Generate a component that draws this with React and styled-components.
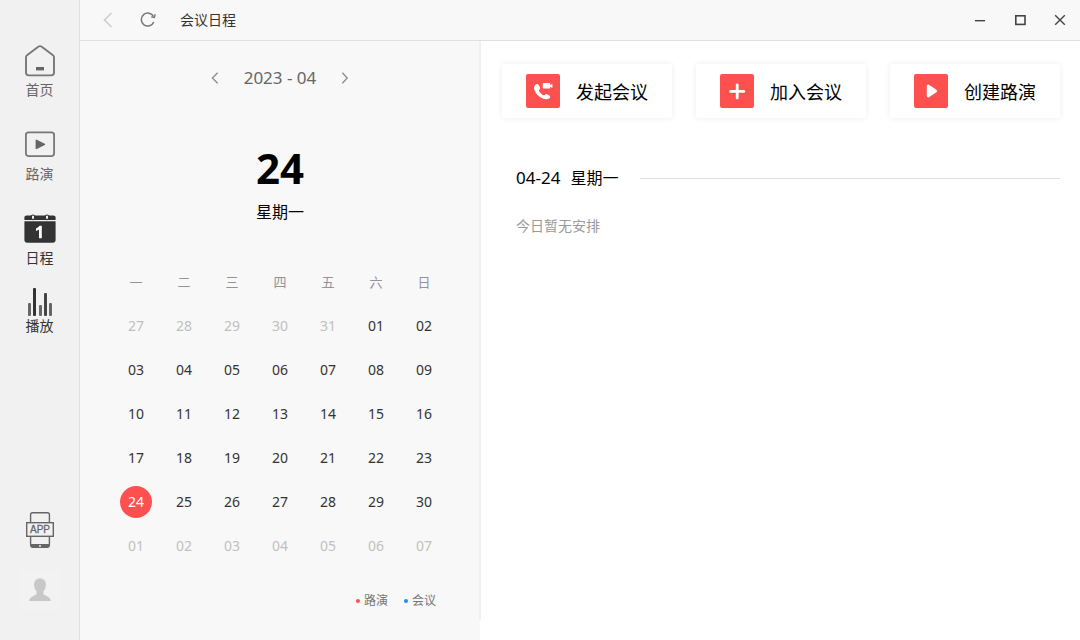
import React,{useState} from 'react';
import styled,{createGlobalStyle} from "styled-components";

const weekNames=["一","二","三","四","五","六","日"];

// April 2023, padded with the days of the months around it
const weeks=[
  ["27","28","29","30","31","01","02"],
  ["03","04","05","06","07","08","09"],
  ["10","11","12","13","14","15","16"],
  ["17","18","19","20","21","22","23"],
  ["24","25","26","27","28","29","30"],
  ["01","02","03","04","05","06","07"],
];

const isOutside=(week,day)=>(week===0 && Number(day)>20) || week===5;

function HomeIcon() {
  return (
    <svg width="32" height="32" viewBox="0 0 32 32" fill="none">
      <path d="M2 12.2Q2 11 3 10.3L14.6 1.6Q16 .6 17.4 1.6L29 10.3Q30 11 30 12.2V27.6Q30 30.4 27.2 30.4H4.8Q2 30.4 2 27.6Z" stroke="#777" strokeWidth="1.9" />
      <rect x="12" y="22" width="8" height="3.4" fill="#666" />
    </svg>
  )
}

function RoadshowIcon() {
  return (
    <svg width="32" height="32" viewBox="0 0 32 32" fill="none">
      <rect x="1.9" y="3.3" width="28.2" height="23.8" rx="2.8" stroke="#777" strokeWidth="1.8" />
      <path d="M12.4 11.4L20.4 15.4L12.4 19.4Z" fill="#666" stroke="#666" strokeWidth="1.6" strokeLinejoin="round" />
    </svg>
  )
}

function ScheduleIcon() {
  return (
    <svg width="32" height="32" viewBox="0 0 32 32">
      <path d="M.4 7V4.6Q.4 2.4 2.6 2.4H29.4Q31.6 2.4 31.6 4.6V7Z" fill="#333" />
      <path d="M.4 8.2H31.6V26.8Q31.6 29.8 28.6 29.8H3.4Q.4 29.8 .4 26.8Z" fill="#333" />
      <rect x="7.4" y="2" width="3.2" height="4.6" rx="1.6" fill="#f1f1f1" stroke="#333" strokeWidth="1.2" />
      <rect x="21.4" y="2" width="3.2" height="4.6" rx="1.6" fill="#f1f1f1" stroke="#333" strokeWidth="1.2" />
      <path d="M12 15.4Q14.6 14.6 15.6 12.8H17.8V25.2H15V16.6Q13.8 17.5 12 17.9Z" fill="#fff" />
    </svg>
  )
}

function PlayIcon() {
  return (
    <svg width="32" height="28" viewBox="0 0 32 28">
      <rect x="4" y="15" width="3" height="13" rx="1" fill="#666" />
      <rect x="9" y="0" width="3" height="28" rx="1" fill="#333" />
      <rect x="15" y="17" width="3" height="11" rx="1" fill="#666" />
      <rect x="20" y="5" width="3" height="23" rx="1" fill="#444" />
      <rect x="25" y="15" width="3" height="13" rx="1" fill="#666" />
    </svg>
  )
}

function PhoneAppIcon() {
  return (
    <svg width="28" height="36" viewBox="0 0 28 36" fill="none">
      <path d="M4.6 10V2.6Q4.6.7 6.4.7H21.6Q23.4.7 23.4 2.6V10" stroke="#666" strokeWidth="1.4" />
      <path d="M4.6 24V32.5M23.4 24V32.5" stroke="#666" strokeWidth="1.4" />
      <path d="M4 32H24V33.6Q24 36 21.6 36H6.4Q4 36 4 33.6Z" fill="#666" />
      <circle cx="14" cy="34" r="1" fill="#f1f1f1" />
      <rect x=".7" y="10.7" width="26.6" height="13.6" stroke="#666" strokeWidth="1.4" />
      <text x="14" y="21" textAnchor="middle" fontFamily="Liberation Sans, sans-serif" fontSize="10" fill="#666" stroke="#666" strokeWidth=".3">APP</text>
    </svg>
  )
}

function PersonIcon() {
  return (
    <svg width="24" height="24" viewBox="0 0 24 24" fill="#c8c8c8">
      <path d="M12 .6C15.8.6 18 3 17.9 6.8C17.8 9.4 17 11.8 15.4 13.3V15.8C15.4 17.4 22.8 18.4 22.8 23H1.2C1.2 18.4 8.6 17.4 8.6 15.8V13.3C7 11.8 6.2 9.4 6.1 6.8C6 3 8.2.6 12 .6Z" />
    </svg>
  )
}

function Chevron({size,color,flip}) {
  return (
    <svg width={size} height={size} viewBox="0 0 16 16" fill="none">
      <path d={flip ? "M4.5 1L11 8L4.5 15" : "M11.5 1L4.5 8L11.5 15"} stroke={color} strokeWidth="1.6" />
    </svg>
  )
}

function RefreshIcon() {
  return (
    <svg width="16" height="16" viewBox="0 0 16 16" fill="none">
      <path d="M13.6 4.6A6.5 6.5 0 1 0 13.8 10" stroke="#777" strokeWidth="1.5" />
      <path d="M15.2 2.2L14.4 5.4L11.2 4.8" stroke="#777" strokeWidth="1.3" />
    </svg>
  )
}

function CallIcon() {
  return (
    <svg width="34" height="34" viewBox="0 0 34 34" fill="#fff">
      <path d="M9.4 10.8C10.6 9.6 11.8 9.6 12.7 11L13.8 13C14.4 14.2 14 15 13.2 15.9C12.8 16.5 12.9 17 13.3 17.6C14.3 19.2 15.6 20.3 17.2 21.2C17.9 21.5 18.3 21.4 18.8 20.9C19.6 20 20.5 19.8 21.5 20.4L23.2 21.4C24.6 22.3 24.5 23.4 23.4 24.3C21.6 25.8 18.7 25.7 15.6 24C12.3 22.2 9.8 19.6 8.6 16.6C7.6 14.2 7.9 12.3 9.4 10.8Z" />
      <rect x="16.8" y="9" width="7.4" height="5.6" rx=".8" />
      <path d="M23.6 11.6L26.4 9.8V14L23.6 12.6Z" />
    </svg>
  )
}

function PlusIcon() {
  return (
    <svg width="34" height="34" viewBox="0 0 34 34" fill="none">
      <path d="M17.2 10.8V24M10.6 17.4H23.8" stroke="#fff" strokeWidth="2.8" strokeLinecap="round" />
    </svg>
  )
}

function StartIcon() {
  return (
    <svg width="34" height="34" viewBox="0 0 34 34">
      <path d="M14.2 12V22L21.6 17Z" fill="#fff" stroke="#fff" strokeWidth="2.8" strokeLinejoin="round" />
    </svg>
  )
}

function App() {
  const [selected,setSelected]=useState("4-24");

  return (
    <Page>
      <GlobalStyle />
      <Sidebar>
        <Nav>
          <NavItem><HomeIcon />首页</NavItem>
          <NavItem><RoadshowIcon />路演</NavItem>
          <NavItem $active><ScheduleIcon />日程</NavItem>
        </Nav>
        <NavItem $active $tight><PlayIcon />播放</NavItem>
        <SideFooter>
          <IconButton aria-label="APP"><PhoneAppIcon /></IconButton>
          <Avatar aria-label="账号"><PersonIcon /></Avatar>
        </SideFooter>
      </Sidebar>
      <Body>
        <TopBar>
          <IconButton aria-label="后退"><Chevron size={16} color="#ccc" /></IconButton>
          <IconButton aria-label="刷新"><RefreshIcon /></IconButton>
          <Title>会议日程</Title>
          <WindowControls>
            <IconButton aria-label="最小化">
              <svg width="12" height="12" viewBox="0 0 12 12"><rect x="1" y="6" width="10" height="1.4" fill="#444" /></svg>
            </IconButton>
            <IconButton aria-label="最大化">
              <svg width="12" height="12" viewBox="0 0 12 12" fill="none"><rect x="1.8" y="1.8" width="9.2" height="8.6" stroke="#444" strokeWidth="1.6" /></svg>
            </IconButton>
            <IconButton aria-label="关闭">
              <svg width="12" height="12" viewBox="0 0 12 12" fill="none"><path d="M1.2 1.2L10.8 10.8M10.8 1.2L1.2 10.8" stroke="#444" strokeWidth="1.4" /></svg>
            </IconButton>
          </WindowControls>
        </TopBar>
        <Content>
          <CalendarPanel>
            <MonthBar>
              <IconButton aria-label="上个月"><Chevron size={12} color="#888" /></IconButton>
              <Month>2023 - 04</Month>
              <IconButton aria-label="下个月"><Chevron size={12} color="#888" flip /></IconButton>
            </MonthBar>
            <BigDay>24</BigDay>
            <WeekDay>星期一</WeekDay>
            <Calendar>
              <thead>
                <tr>{weekNames.map((name)=><th key={name}>{name}</th>)}</tr>
              </thead>
              <tbody>
                {weeks.map((week,i)=>(
                  <tr key={i}>
                    {week.map((day)=>(
                      <td key={day}>
                        <Day
                          $outside={isOutside(i,day)}
                          $selected={selected===`${i}-${day}`}
                          onClick={()=>setSelected(`${i}-${day}`)}
                        >{day}</Day>
                      </td>
                    ))}
                  </tr>
                ))}
              </tbody>
            </Calendar>
            <Legend>
              <LegendItem $color="#ff5050">路演</LegendItem>
              <LegendItem $color="#1890ff">会议</LegendItem>
            </Legend>
          </CalendarPanel>
          <Main>
            <Actions>
              <ActionCard><ActionIcon><CallIcon /></ActionIcon>发起会议</ActionCard>
              <ActionCard><ActionIcon><PlusIcon /></ActionIcon>加入会议</ActionCard>
              <ActionCard><ActionIcon><StartIcon /></ActionIcon>创建路演</ActionCard>
            </Actions>
            <Agenda>
              <AgendaHead>
                <AgendaDate>04-24</AgendaDate>
                <span>星期一</span>
                <Rule />
              </AgendaHead>
              <Empty>今日暂无安排</Empty>
            </Agenda>
          </Main>
        </Content>
      </Body>
    </Page>
  )
}

const GlobalStyle=createGlobalStyle`
  *{
    box-sizing:border-box;
  }
  body{
    margin:0;
    font-family:"Noto Sans","Noto Sans CJK SC",sans-serif;
    font-size:14px;
    color:#000;
    background:#fff;
  }
  button{
    font-family:inherit;
    padding:0;
    border:none;
    background:none;
    cursor:pointer;
  }
  svg{
    display:block;
  }
`
const Page=styled.div`
  display:flex;
  min-height:100vh;
`
const Sidebar=styled.aside`
  display:flex;
  flex-direction:column;
  align-items:center;
  width:80px;
  padding:45px 0 30px;
  background:#f1f1f1;
  border-right:1px solid #e0e0e0;
`
const Nav=styled.nav`
  display:flex;
  flex-direction:column;
  gap:29px;
  margin-bottom:20px;
`
const NavItem=styled.button`
  display:flex;
  flex-direction:column;
  align-items:center;
  gap:${(props)=>props.$tight ? "0" : "3px"};
  font-size:14px;
  line-height:20px;
  color:${(props)=>props.$active ? "#333" : "#666"};
`
const SideFooter=styled.div`
  display:flex;
  flex-direction:column;
  align-items:center;
  gap:22px;
  margin-top:auto;
`
const IconButton=styled.button`
  display:flex;
  align-items:center;
  justify-content:center;
`
const Avatar=styled(IconButton)`
  width:40px;
  height:40px;
  background:#f2f2f2;
`
const Body=styled.div`
  flex:1;
  display:flex;
  flex-direction:column;
`
const TopBar=styled.header`
  display:flex;
  align-items:center;
  gap:24px;
  height:41px;
  padding:0 14px 0 20px;
  background:#f8f8f8;
  border-bottom:1px solid #e0e0e0;
`
const Title=styled.h1`
  margin:0;
  font-size:14px;
  font-weight:400;
  line-height:20px;
  color:#333;
`
const WindowControls=styled.div`
  display:flex;
  gap:28px;
  margin-left:auto;
`
const Content=styled.div`
  flex:1;
  display:flex;
`
const CalendarPanel=styled.section`
  position:relative;
  width:400px;
  padding:21px 32px 20px;
  background:#f8f8f8;

  &::after{
    content:"";
    position:absolute;
    top:0;
    right:-1px;
    bottom:20px;
    width:2px;
    background:#f0f0f0;
  }
`
const MonthBar=styled.div`
  display:flex;
  justify-content:center;
  gap:23px;
  height:32px;
`
const Month=styled.span`
  font-size:17px;
  line-height:32px;
  color:#666;
`
const BigDay=styled.div`
  margin-top:50px;
  font-size:42px;
  font-weight:700;
  line-height:48px;
  text-align:center;
`
const WeekDay=styled.div`
  margin:8px 0 36px;
  font-size:16px;
  line-height:24px;
  text-align:center;
`
const Calendar=styled.table`
  width:100%;
  table-layout:fixed;
  border-collapse:collapse;

  th,td{
    height:44px;
    padding:0;
    text-align:center;
  }
  th{
    padding-bottom:2px;
    font-size:13px;
    font-weight:400;
    color:#909399;
  }
`
const Day=styled.button`
  display:block;
  width:32px;
  height:32px;
  margin:0 auto;
  border-radius:50%;
  font-size:14px;
  line-height:32px;
  color:${(props)=>props.$selected ? "#fff" : props.$outside ? "#c0c0c0" : "#333"};
  ${(props)=>props.$selected && "background:#ff5050;"}
`
const Legend=styled.div`
  display:flex;
  justify-content:flex-end;
  gap:16px;
  margin-top:23px;
  padding-right:12px;
`
const LegendItem=styled.span`
  display:flex;
  align-items:center;
  gap:4px;
  font-size:12px;
  line-height:20px;
  color:#777;

  &::before{
    content:"";
    width:4px;
    height:4px;
    border-radius:50%;
    background:${(props)=>props.$color};
  }
`
const Main=styled.main`
  flex:1;
  padding:23px 20px 20px 22px;
`
const Actions=styled.div`
  display:flex;
  gap:24px;
`
const ActionCard=styled.button`
  flex:1;
  display:flex;
  align-items:center;
  justify-content:center;
  gap:16px;
  height:54px;
  border-radius:2px;
  font-size:18px;
  color:#000;
  background:#fff;
  box-shadow:0 0 6px rgba(0,0,0,0.08);
`
const ActionIcon=styled.span`
  border-radius:2px;
  background:#ff5050;
`
const Agenda=styled.section`
  margin-top:48px;
  padding-left:14px;
`
const AgendaHead=styled.div`
  display:flex;
  align-items:center;
  font-size:16px;
  line-height:24px;
`
const AgendaDate=styled.span`
  margin-right:10px;
  font-size:17px;
`
const Rule=styled.span`
  flex:1;
  height:1px;
  margin-left:22px;
  background:#e0e0e0;
`
const Empty=styled.p`
  margin:26px 0 0;
  font-size:14px;
  line-height:20px;
  color:#999;
`

export default App;
